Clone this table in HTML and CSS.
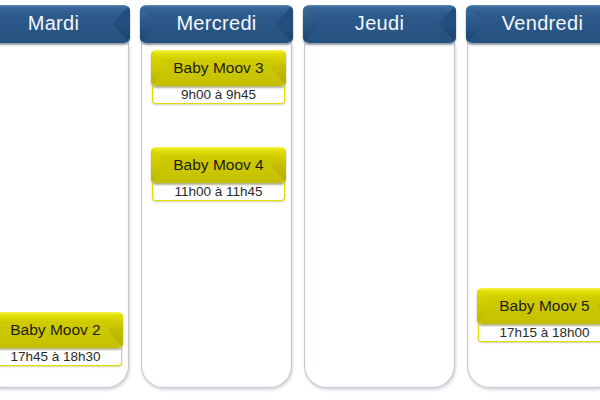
FILE: index.html
```html
<!DOCTYPE html>
<html lang="fr">
<head>
<meta charset="utf-8">
<title>Planning</title>
<link rel="stylesheet" href="styles.css">
</head>
<body>
<div class="week">
  <div class="col">
    <div class="head">Mardi</div>
    <div class="body">
      <div class="event" style="top:269px">
        <div class="btn">Baby Moov 2</div>
        <div class="time">17h45 à 18h30</div>
      </div>
    </div>
  </div>
  <div class="col">
    <div class="head">Mercredi</div>
    <div class="body">
      <div class="event" style="top:7px">
        <div class="btn">Baby Moov 3</div>
        <div class="time">9h00 à 9h45</div>
      </div>
      <div class="event" style="top:104px">
        <div class="btn">Baby Moov 4</div>
        <div class="time">11h00 à 11h45</div>
      </div>
    </div>
  </div>
  <div class="col">
    <div class="head">Jeudi</div>
    <div class="body"></div>
  </div>
  <div class="col">
    <div class="head">Vendredi</div>
    <div class="body">
      <div class="event" style="top:245px">
        <div class="btn">Baby Moov 5</div>
        <div class="time">17h15 à 18h00</div>
      </div>
    </div>
  </div>
</div>
</body>
</html>
```

FILE: styles.css
```css
html, body {
  margin: 0;
  padding: 0;
  background: #ffffff;
  overflow: hidden;
}
body {
  width: 600px;
  height: 400px;
  font-family: "Liberation Sans", Arial, sans-serif;
}
.week {
  display: flex;
  gap: 10px;
  margin-left: -23px;
  padding-top: 5px;
}
.col {
  flex: 0 0 153px;
  display: flex;
  flex-direction: column;
}
.head {
  position: relative;
  height: 38px;
  border-radius: 6px;
  background: linear-gradient(to bottom, #5f8cbb 0px, #3a6a9c 2px, #2d5b8c 8px, #25517f 100%);
  color: #f4f7fb;
  font-size: 20px;
  line-height: 36px;
  letter-spacing: 0.3px;
  text-align: center;
  box-shadow: 0 2px 2px rgba(10, 30, 60, 0.45);
  overflow: hidden;
  z-index: 2;
}
.head::before,
.head::after {
  content: "";
  position: absolute;
  top: 0;
  width: 18px;
  height: 100%;
}
.head::before {
  left: 0;
  clip-path: polygon(0 0, 100% 50%, 0 100%);
  background: linear-gradient(to bottom, #3b6c9e 0%, #2a5787 50%, #1c436e 100%);
}
.head::after {
  right: 0;
  clip-path: polygon(100% 0, 0 50%, 100% 100%);
  background: linear-gradient(to bottom, #1f4b7a 0%, #24507f 50%, #1b426c 100%);
}
.body {
  position: relative;
  height: 344px;
  margin: 0 1px;
  background: #ffffff;
  border: 1px solid #c3c8d2;
  border-top: none;
  border-radius: 0 0 22px 22px;
  box-shadow: 1px 2px 3px rgba(90, 100, 120, 0.25), inset 0 0 2px rgba(200, 205, 215, 0.4);
}
.event {
  position: absolute;
  left: 9px;
  right: 5px;
  display: flex;
  flex-direction: column;
}
.btn {
  position: relative;
  height: 36px;
  border-radius: 5px;
  background: linear-gradient(to bottom, #f6f64a 0px, #e4e20c 3px, #cfcb00 10px, #c4c000 100%);
  color: #1e1e10;
  font-size: 15.5px;
  line-height: 35px;
  text-align: center;
  box-shadow: 0 2px 2px rgba(90, 90, 0, 0.45);
  overflow: hidden;
  z-index: 1;
}
.btn::before,
.btn::after {
  content: "";
  position: absolute;
  top: 0;
  width: 15px;
  height: 100%;
}
.btn::before {
  left: 0;
  clip-path: polygon(0 0, 100% 50%, 0 100%);
  background: linear-gradient(to bottom, #e0dc00 0%, #cdc900 50%, #b8b400 100%);
}
.btn::after {
  right: 0;
  clip-path: polygon(100% 0, 0 50%, 100% 100%);
  background: linear-gradient(to bottom, #e8e40a 0%, #c2be00 50%, #b3af00 100%);
}
.time {
  height: 17px;
  margin: 0 1px;
  background: #ffffff;
  border: 1px solid #e3dc00;
  border-top: none;
  border-radius: 0 0 4px 4px;
  color: #2a2a2a;
  font-size: 13.5px;
  line-height: 18px;
  text-align: center;
  box-shadow: 0 1px 2px rgba(120, 120, 0, 0.35);
}
```
